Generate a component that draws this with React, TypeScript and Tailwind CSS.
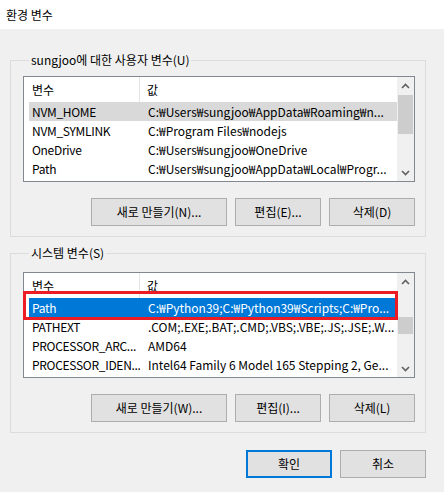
import React from 'react';

type Row = { name: string; value: string; sel?: 'gray' | 'blue' };

const userRows: Row[] = [
  { name: 'NVM_HOME', value: 'C:₩Users₩sungjoo₩AppData₩Roaming₩n...', sel: 'gray' },
  { name: 'NVM_SYMLINK', value: 'C:₩Program Files₩nodejs' },
  { name: 'OneDrive', value: 'C:₩Users₩sungjoo₩OneDrive' },
  { name: 'Path', value: 'C:₩Users₩sungjoo₩AppData₩Local₩Progr...' },
  { name: 'TEMP', value: 'C:₩Users₩sungjoo₩AppData₩Local₩Temp' },
];

const systemRows: Row[] = [
  { name: 'Path', value: 'C:₩Python39;C:₩Python39₩Scripts;C:₩Pro...', sel: 'blue' },
  { name: 'PATHEXT', value: '.COM;.EXE;.BAT;.CMD;.VBS;.VBE;.JS;.JSE;.W...' },
  { name: 'PROCESSOR_ARC...', value: 'AMD64' },
  { name: 'PROCESSOR_IDEN...', value: 'Intel64 Family 6 Model 165 Stepping 2, Ge...' },
];

function Chevron({ down }: { down?: boolean }) {
  return (
    <svg width="9" height="6" viewBox="0 0 9 6" className="block">
      <polyline
        points={down ? '1,1 4.5,4.5 8,1' : '1,5 4.5,1.5 8,5'}
        fill="none"
        stroke="#606060"
        strokeWidth="1.6"
      />
    </svg>
  );
}

function VarList({ rows, thumbTop, thumbH }: { rows: Row[]; thumbTop: number; thumbH: number }) {
  return (
    <div className="flex h-[106px] w-[392px] border border-[#828790] bg-white overflow-hidden">
      <div className="flex-1 flex flex-col overflow-hidden">
        <div className="flex h-[25px] shrink-0 items-center">
          <div className="w-[116px] h-full pl-[8px] flex items-center border-r border-[#e5e5e5]">변수</div>
          <div className="pl-[7px]">값</div>
        </div>
        {rows.map((r) => (
          <div
            key={r.name}
            className={
              'flex h-[19px] shrink-0 ml-[5px] items-center whitespace-nowrap ' +
              (r.sel === 'blue' ? 'bg-[#0078d7] text-white' : r.sel === 'gray' ? 'bg-[#d9d9d9]' : '')
            }
          >
            <div className="w-[111px] pl-[3px] overflow-hidden tracking-[-0.3px]">{r.name}</div>
            <div className="pl-[8px] overflow-hidden">{r.value}</div>
          </div>
        ))}
      </div>
      <div className="w-[17px] bg-[#f0f0f0] flex flex-col items-center">
        <div className="h-[17px] flex items-center justify-center">
          <Chevron />
        </div>
        <div className="flex-1 w-full px-[1px]">
          <div className="bg-[#cdcdcd] w-full" style={{ marginTop: thumbTop, height: thumbH }} />
        </div>
        <div className="h-[17px] flex items-center justify-center">
          <Chevron down />
        </div>
      </div>
    </div>
  );
}

function Btn({ children, w, focus }: { children: React.ReactNode; w: string; focus?: boolean }) {
  return (
    <button
      className={
        'h-[28px] bg-[#e1e1e1] flex items-center justify-center ' +
        w +
        (focus ? ' border-2 border-[#0078d7]' : ' border border-[#adadad]')
      }
    >
      {children}
    </button>
  );
}

function Group({ title, children }: { title: string; children: React.ReactNode }) {
  return (
    <fieldset className="ml-[10px] w-[416px] border border-[#dcdcdc] pl-[12px] pr-[10px] pb-[10px]">
      <legend className="ml-[6px] px-[2px] leading-[16px]">{title}</legend>
      {children}
    </fieldset>
  );
}

export default function App() {
  return (
    <div
      className="w-[444px] h-[492px] bg-[#f0f0f0] text-[12px] text-black flex flex-col"
      style={{ fontFamily: '"Noto Sans CJK KR", "Noto Sans", sans-serif' }}
    >
      <div className="h-[29px] bg-white flex items-center pl-[6px]">환경 변수</div>
      <div className="pt-[23px] flex flex-col">
        <Group title="sungjoo에 대한 사용자 변수(U)">
          <div className="pt-[8px]">
            <VarList rows={userRows} thumbTop={1} thumbH={39} />
          </div>
          <div className="flex justify-end gap-[8px] mt-[16px]">
            <Btn w="w-[136px]">새로 만들기(N)...</Btn>
            <Btn w="w-[86px]">편집(E)...</Btn>
            <Btn w="w-[86px]">삭제(D)</Btn>
          </div>
        </Group>
        <div className="mt-[8px]">
          <Group title="시스템 변수(S)">
            <div className="pt-[11px] relative">
              <VarList rows={systemRows} thumbTop={27} thumbH={17} />
              <div className="absolute left-0 top-[30px] w-[375px] h-[29px] border-[3px] border-[#ed1c24]" />
            </div>
            <div className="flex justify-end gap-[8px] mt-[16px]">
              <Btn w="w-[136px]">새로 만들기(W)...</Btn>
              <Btn w="w-[86px]">편집(I)...</Btn>
              <Btn w="w-[86px]">삭제(L)</Btn>
            </div>
          </Group>
        </div>
        <div className="flex justify-end gap-[8px] mt-[17px] pr-[18px]">
          <Btn w="w-[86px]" focus>
            확인
          </Btn>
          <Btn w="w-[86px]">취소</Btn>
        </div>
      </div>
    </div>
  );
}
